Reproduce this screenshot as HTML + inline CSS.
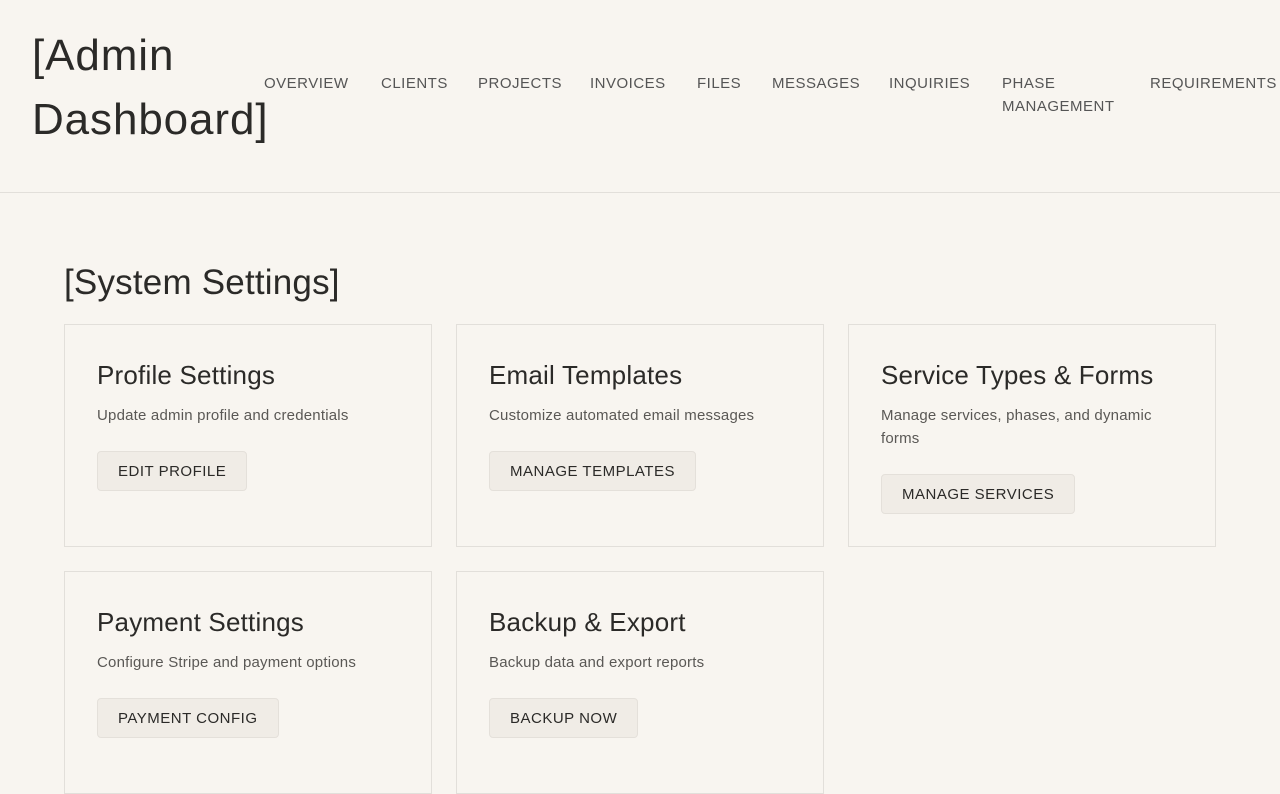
<!DOCTYPE html>
<html><head><meta charset="utf-8"><style>
body{margin:0;background:#f8f5f0;font-family:"Liberation Sans",sans-serif;color:#2b2a28;width:1280px;height:720px;overflow:hidden;position:relative}
.t{position:absolute;white-space:nowrap}
.title{left:32px;top:24px;font-size:44px;line-height:64px;font-weight:400;color:#2b2a28;letter-spacing:0.9px}
.nav{font-size:15px;color:#555;letter-spacing:0.5px;line-height:23px;top:72px}
.hr{position:absolute;left:0;top:192px;width:1280px;height:1px;background:#e2dfda}
h2{position:absolute;left:64px;top:261px;margin:0;font-size:35px;font-weight:400;line-height:44px;color:#2b2a28;letter-spacing:0.2px}
.card{position:absolute;width:366px;height:221px;border:1px solid #e2dfda;box-sizing:content-box}
.card .h{position:absolute;left:32px;top:33px;font-size:26px;line-height:34px;color:#2b2a28;white-space:nowrap;letter-spacing:0.2px}
.card .d{position:absolute;left:32px;top:79px;width:300px;font-size:15px;line-height:23px;color:#5a5855;letter-spacing:0.2px}
.card .b{position:absolute;left:32px;height:38px;border:1px solid #e4e0da;background:#f0ece6;border-radius:4px;font-size:15px;letter-spacing:0.5px;line-height:39px;padding:0 20px;color:#2b2a28;white-space:nowrap}
</style></head><body>
<div class="t title">[Admin<br>Dashboard]</div>
<div class="t nav" style="left:264px">OVERVIEW</div>
<div class="t nav" style="left:381px">CLIENTS</div>
<div class="t nav" style="left:478px">PROJECTS</div>
<div class="t nav" style="left:590px">INVOICES</div>
<div class="t nav" style="left:697px">FILES</div>
<div class="t nav" style="left:772px">MESSAGES</div>
<div class="t nav" style="left:889px">INQUIRIES</div>
<div class="t nav" style="left:1002px">PHASE<br>MANAGEMENT</div>
<div class="t nav" style="left:1150px">REQUIREMENTS</div>
<div class="hr"></div>
<h2>[System Settings]</h2>
<div class="card" style="left:64px;top:324px"><div class="h">Profile Settings</div><div class="d">Update admin profile and credentials</div><div class="b" style="top:126px">EDIT PROFILE</div></div>
<div class="card" style="left:456px;top:324px"><div class="h">Email Templates</div><div class="d">Customize automated email messages</div><div class="b" style="top:126px">MANAGE TEMPLATES</div></div>
<div class="card" style="left:848px;top:324px"><div class="h">Service Types &amp; Forms</div><div class="d">Manage services, phases, and dynamic forms</div><div class="b" style="top:149px">MANAGE SERVICES</div></div>
<div class="card" style="left:64px;top:571px"><div class="h">Payment Settings</div><div class="d">Configure Stripe and payment options</div><div class="b" style="top:126px">PAYMENT CONFIG</div></div>
<div class="card" style="left:456px;top:571px"><div class="h">Backup &amp; Export</div><div class="d">Backup data and export reports</div><div class="b" style="top:126px">BACKUP NOW</div></div>
</body></html>
